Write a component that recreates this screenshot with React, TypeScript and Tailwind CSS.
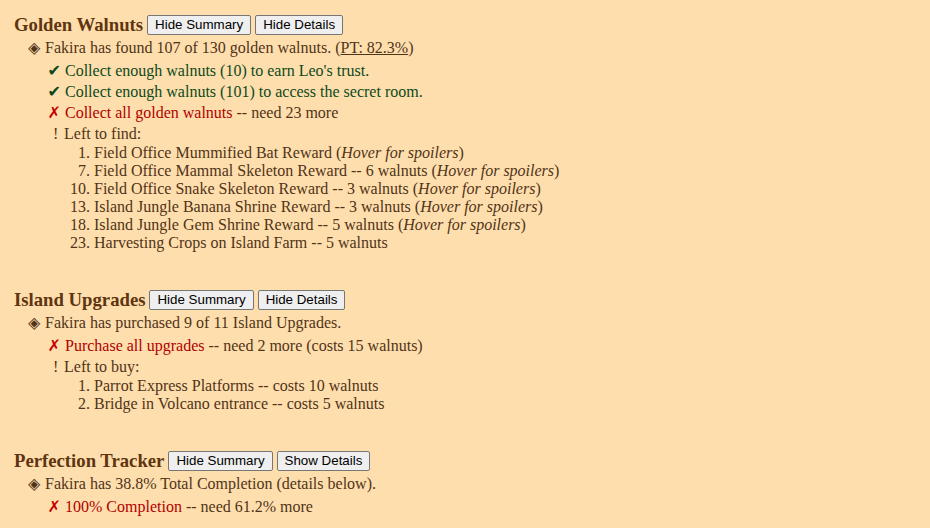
import React from 'react';

const serif = { fontFamily: '"Liberation Serif", "Times New Roman", serif' };
const symbol = { fontFamily: '"DejaVu Sans", sans-serif' };

function Btn({ label }: { label: string }) {
  return (
    <button
      className="h-[20px] px-[7px] border border-[#767676] rounded-[2px] bg-[#efefef] text-[13.33px] leading-[18px] text-black"
      style={{ fontFamily: '"Liberation Sans", Arial, sans-serif' }}
    >
      {label}
    </button>
  );
}

function Heading({ title, details }: { title: string; details: string }) {
  return (
    <div className="flex items-center h-[22px] gap-[4px]">
      <span className="text-[18.72px] font-bold text-[#5e3510] leading-[22px]">{title}</span>
      <Btn label="Hide Summary" />
      <Btn label={details} />
    </div>
  );
}

function Summary({ children }: { children: React.ReactNode }) {
  return (
    <div className="flex leading-[24px] pl-[28px]">
      <span className="w-[17px] text-[16px] text-[#4f3418]" style={symbol}>◈</span>
      <span>{children}</span>
    </div>
  );
}

function Item({ mark, children }: { mark: 'ok' | 'no' | 'note'; children: React.ReactNode }) {
  if (mark === 'note') {
    return (
      <div className="flex leading-[21px] pl-[53px]">
        <span className="w-[11px]">!</span>
        <span>{children}</span>
      </div>
    );
  }
  const ok = mark === 'ok';
  return (
    <div className="flex leading-[21px] pl-[45px]">
      <span
        className={`w-[20px] pr-[4px] text-right ${ok ? 'text-[16px] text-[#0c4a1c]' : 'text-[16px] font-bold text-[#c40000]'}`}
        style={symbol}
      >
        {ok ? '✔' : '✗'}
      </span>
      <span>{children}</span>
    </div>
  );
}

function NumList({ items }: { items: [number, React.ReactNode][] }) {
  return (
    <div className="flex flex-col">
      {items.map(([n, text]) => (
        <div key={n} className="flex leading-[18px]">
          <span className="w-[90px] text-right">{n}.</span>
          <span className="pl-[4px]">{text}</span>
        </div>
      ))}
    </div>
  );
}

const spoil = <i>Hover for spoilers</i>;

export default function App() {
  return (
    <div className="min-h-screen w-full bg-[#ffdead] text-[16px] text-[#4f3418] pl-[14px] pt-[14px]" style={serif}>
      <Heading title="Golden Walnuts" details="Hide Details" />
      <div className="-ml-[14px]">
        <Summary>
          Fakira has found 107 of 130 golden walnuts. (<span className="underline">PT: 82.3%</span>)
        </Summary>
        <Item mark="ok"><span className="text-[#0c4a1c]">Collect enough walnuts (10) to earn Leo's trust.</span></Item>
        <Item mark="ok"><span className="text-[#0c4a1c]">Collect enough walnuts (101) to access the secret room.</span></Item>
        <Item mark="no"><span className="text-[#b00000]">Collect all golden walnuts</span> -- need 23 more</Item>
        <Item mark="note">Left to find:</Item>
        <NumList
          items={[
            [1, <>Field Office Mummified Bat Reward ({spoil})</>],
            [7, <>Field Office Mammal Skeleton Reward -- 6 walnuts ({spoil})</>],
            [10, <>Field Office Snake Skeleton Reward -- 3 walnuts ({spoil})</>],
            [13, <>Island Jungle Banana Shrine Reward -- 3 walnuts ({spoil})</>],
            [18, <>Island Jungle Gem Shrine Reward -- 5 walnuts ({spoil})</>],
            [23, <>Harvesting Crops on Island Farm -- 5 walnuts</>],
          ]}
        />
      </div>

      <div className="mt-[37px]">
        <Heading title="Island Upgrades" details="Hide Details" />
      </div>
      <div className="-ml-[14px]">
        <Summary>Fakira has purchased 9 of 11 Island Upgrades.</Summary>
        <Item mark="no"><span className="text-[#b00000]">Purchase all upgrades</span> -- need 2 more (costs 15 walnuts)</Item>
        <Item mark="note">Left to buy:</Item>
        <NumList
          items={[
            [1, <>Parrot Express Platforms -- costs 10 walnuts</>],
            [2, <>Bridge in Volcano entrance -- costs 5 walnuts</>],
          ]}
        />
      </div>

      <div className="mt-[37px]">
        <Heading title="Perfection Tracker" details="Show Details" />
      </div>
      <div className="-ml-[14px]">
        <Summary>Fakira has 38.8% Total Completion (details below).</Summary>
        <Item mark="no"><span className="text-[#b00000]">100% Completion</span> -- need 61.2% more</Item>
      </div>
    </div>
  );
}
